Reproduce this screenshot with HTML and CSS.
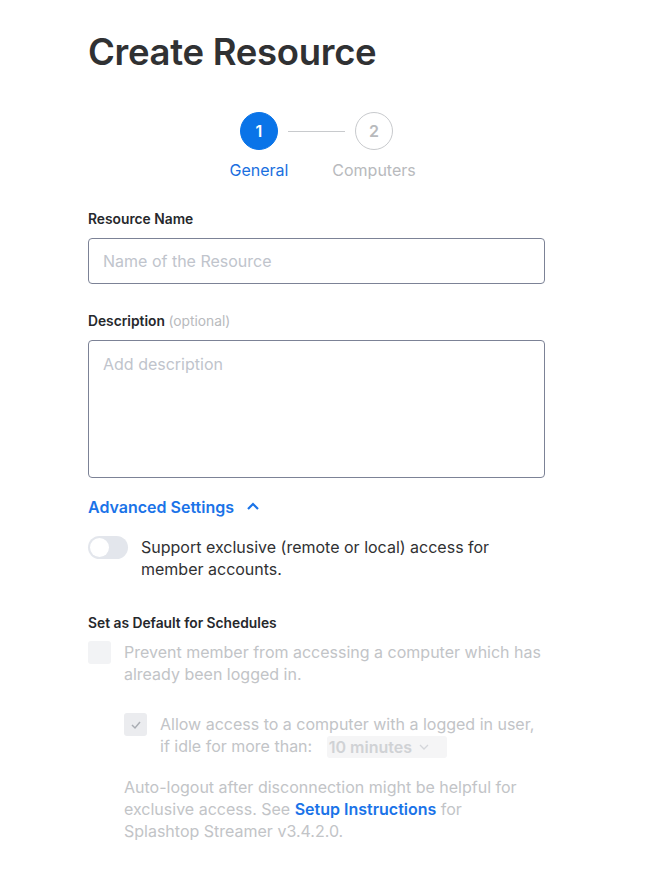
FILE: index.html
```html
<!DOCTYPE html>
<html>
<head>
<meta charset="utf-8">
<link rel="stylesheet" href="styles.css">
</head>
<body>
<div class="page">
  <h1 class="title">Create Resource</h1>

  <div class="stepper">
    <div class="step active">
      <div class="circle">1</div>
      <div class="step-label">General</div>
    </div>
    <div class="connector"></div>
    <div class="step">
      <div class="circle">2</div>
      <div class="step-label">Computers</div>
    </div>
  </div>

  <div class="field">
    <label class="label">Resource Name</label>
    <div class="input">Name of the Resource</div>
  </div>

  <div class="field field-desc">
    <label class="label">Description <span class="optional">(optional)</span></label>
    <div class="textarea">Add description</div>
  </div>

  <div class="advanced">
    <span>Advanced Settings</span>
    <svg class="chev" width="14" height="10" viewBox="0 0 14 10"><path d="M2 8 L7 3 L12 8" fill="none" stroke="#1a73e8" stroke-width="2.2"/></svg>
  </div>

  <div class="toggle-row">
    <div class="toggle"><div class="knob"></div></div>
    <div class="toggle-text">Support exclusive (remote or local) access for member accounts.</div>
  </div>

  <div class="label label-sched">Set as Default for Schedules</div>

  <div class="check-row">
    <div class="checkbox"></div>
    <div class="check-text">Prevent member from accessing a computer which has already been logged in.</div>
  </div>

  <div class="check-row nested">
    <div class="checkbox checked">
      <svg width="12" height="10" viewBox="0 0 12 10"><path d="M2 5 L5 8 L10 2" fill="none" stroke="#a9adb3" stroke-width="1.5"/></svg>
    </div>
    <div class="check-text">Allow access to a computer with a logged in user, if idle for more than: <span class="select">10 minutes <svg width="10" height="6" viewBox="0 0 10 6"><path d="M1 1 L5 5 L9 1" fill="none" stroke="#d4d6da" stroke-width="1.3"/></svg></span></div>
  </div>

  <div class="note">Auto-logout after disconnection might be helpful for exclusive access. See <a class="link">Setup Instructions</a> for Splashtop Streamer v3.4.2.0.</div>
</div>
</body>
</html>
```
FILE: styles.css
```css
* { box-sizing: border-box; }
body {
  margin: 0;
  background: #fff;
  font-family: Inter, "Noto Sans", sans-serif;
  color: #303133;
}
.page {
  width: 457px;
  margin-left: 88px;
  padding-top: 28px;
}
.title {
  margin: 0;
  font-size: 36.5px;
  font-weight: 600;
  line-height: 48px;
  color: #303133;
  letter-spacing: -0.3px;
}
.stepper {
  display: flex;
  justify-content: center;
  align-items: flex-start;
  margin-top: 36px;
}
.step {
  display: flex;
  flex-direction: column;
  align-items: center;
  width: 90px;
}
.circle {
  width: 38px;
  height: 38px;
  border-radius: 50%;
  border: 1px solid #c8cacd;
  color: #b8babd;
  display: flex;
  align-items: center;
  justify-content: center;
  font-size: 16px;
  font-weight: 600;
}
.step.active .circle {
  background: #0a74e8;
  border-color: #0a74e8;
  color: #fff;
}
.step-label {
  margin-top: 10px;
  font-size: 16px;
  line-height: 20px;
  color: #b8babd;
}
.step.active .step-label { color: #1a6fe0; }
.connector {
  width: 57px;
  height: 1px;
  background: #c8cacd;
  margin: 19px -16px 0;
}
.field { margin-top: 30px; }
.field-desc { margin-top: 28px; }
.label {
  display: block;
  font-size: 13.8px;
  font-weight: 600;
  line-height: 18px;
  color: #26282c;
}
.optional { font-weight: 400; color: #b8babd; }
.input, .textarea {
  margin-top: 10px;
  border: 1px solid #7c8296;
  border-radius: 4px;
  font-size: 16px;
  color: #c0c4cc;
  padding: 0 14px;
}
.input {
  height: 46px;
  line-height: 44px;
}
.textarea {
  height: 138px;
  padding-top: 12px;
  line-height: 22px;
}
.advanced {
  margin-top: 18px;
  display: flex;
  align-items: center;
  gap: 12px;
  font-size: 16px;
  font-weight: 600;
  color: #1a73e8;
  line-height: 22px;
}
.chev { margin-top: -2px; }
.toggle-row {
  display: flex;
  gap: 13px;
  margin-top: 18px;
}
.toggle {
  flex: none;
  width: 40px;
  height: 23px;
  border-radius: 12px;
  background: #e3e6ec;
  position: relative;
}
.knob {
  position: absolute;
  left: 2px;
  top: 2px;
  width: 19px;
  height: 19px;
  border-radius: 50%;
  background: #fff;
}
.toggle-text {
  font-size: 16px;
  line-height: 22px;
  color: #303133;
  width: 370px;
}
.label-sched { margin-top: 34px; }
.check-row {
  display: flex;
  gap: 13px;
  margin-top: 9px;
}
.checkbox {
  flex: none;
  width: 23px;
  height: 23px;
  border-radius: 3px;
  background: #f2f3f5;
  display: flex;
  align-items: center;
  justify-content: center;
}
.checkbox.checked { background: #ebecef; }
.check-text {
  font-size: 16px;
  line-height: 22px;
  color: #c2c4c7;
}
.nested {
  margin-left: 36px;
  margin-top: 28px;
}
.select {
  display: inline-flex;
  align-items: center;
  gap: 7px;
  margin-left: 10px;
  padding: 0 7px 0 2px;
  height: 22px;
  width: 120px;
  background: #f5f5f6;
  border-radius: 3px;
  font-weight: 600;
  color: #d0d2d5;
  vertical-align: top;
  margin-top: 1px;
}
.note {
  margin-left: 36px;
  margin-top: 18px;
  font-size: 16px;
  line-height: 22px;
  color: #c2c4c7;
  width: 410px;
}
.link {
  color: #1a73e8;
  font-weight: 600;
}
```
